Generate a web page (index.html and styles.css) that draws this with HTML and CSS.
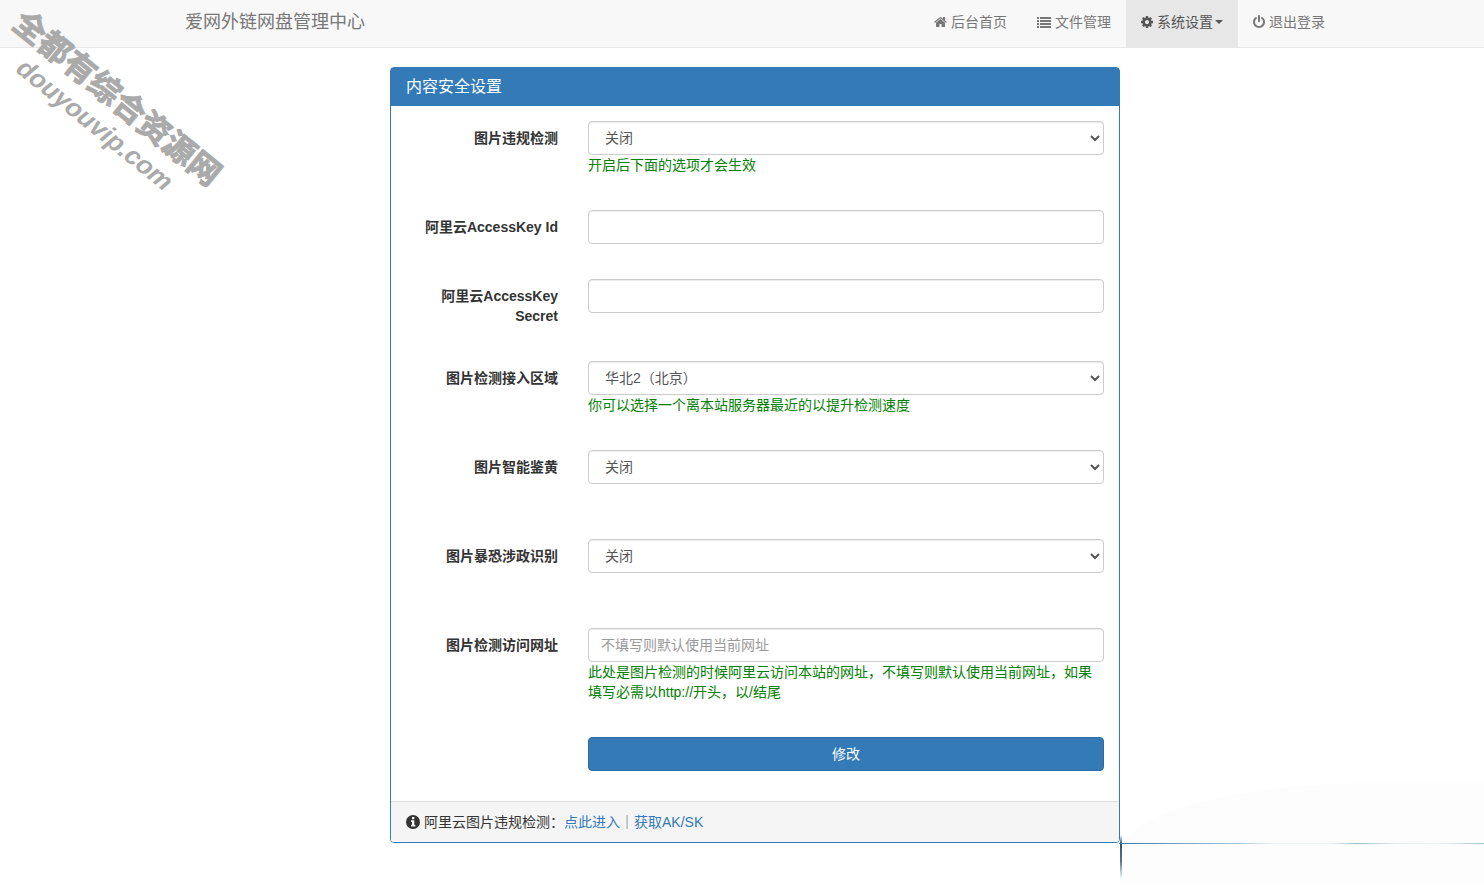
FILE: index.html
```html
<!DOCTYPE html>
<html lang="zh-CN">
<head>
<meta charset="utf-8">
<title>内容安全设置</title>
<link rel="stylesheet" href="styles.css">
</head>
<body>
<header class="navbar">
  <div class="navbar-inner">
    <a class="brand" href="#">爱网外链网盘管理中心</a>
    <nav class="nav">
      <a class="nav-link" href="#"><svg class="icon icon-home" viewBox="64 0 1664 1792" aria-hidden="true"><path d="M1472 992v480q0 26-19 45t-45 19h-384v-384h-256v384h-384q-26 0-45-19t-19-45v-480q0-1 .5-3t.5-3l575-474 575 474q1 2 1 6zm223-69l-62 74q-8 9-21 11h-3q-13 0-21-7l-692-577-692 577q-12 8-24 7-13-2-21-11l-62-74q-8-10-7-23.5t11-21.5l719-599q32-26 76-26t76 26l244 204v-195q0-14 9-23t23-9h192q14 0 23 9t9 23v408l219 182q10 8 11 21.5t-7 23.5z"/></svg>后台首页</a>
      <a class="nav-link" href="#"><svg class="icon" viewBox="0 0 14 14" aria-hidden="true"><path d="M0 2h2v2H0zM3 2h11v2H3zM0 5h2v2H0zM3 5h11v2H3zM0 8h2v2H0zM3 8h11v2H3zM0 11h2v2H0zM3 11h11v2H3z"/></svg>文件管理</a>
      <a class="nav-link active" href="#"><svg class="icon icon-narrow" viewBox="128 0 1536 1792" aria-hidden="true"><path d="M1152 896q0-106-75-181t-181-75-181 75-75 181 75 181 181 75 181-75 75-181zm512-109v222q0 12-8 23t-20 13l-185 28q-19 54-39 91 35 50 107 138 10 12 10 25t-9 23q-27 37-99 108t-94 71q-12 0-26-9l-138-108q-44 23-91 38-16 136-29 186-7 28-36 28h-222q-14 0-24.5-8.5t-11.5-21.5l-28-184q-49-16-90-37l-141 107q-10 9-25 9-14 0-25-11-126-114-165-168-7-10-7-23 0-12 8-23 15-21 51-66.5t54-70.5q-27-50-41-99l-183-27q-13-2-21-12.5t-8-23.5v-222q0-12 8-23t19-13l186-28q14-46 39-92-40-57-107-138-10-12-10-24 0-10 9-23 26-36 98.5-107.5t94.5-71.5q13 0 26 10l138 107q44-23 91-38 16-136 29-186 7-28 36-28h222q14 0 24.5 8.5t11.5 21.5l28 184q49 16 90 37l142-107q9-9 24-9 13 0 25 10 129 119 165 170 7 8 7 22 0 12-8 23-15 21-51 66.5t-54 70.5q26 50 41 98l183 28q13 2 21 12.5t8 23.5z"/></svg>系统设置<span class="caret"></span></a>
      <a class="nav-link" href="#"><svg class="icon icon-narrow" viewBox="128 0 1536 1792" aria-hidden="true"><path d="M1664 896q0 156-61 298t-164 245-245 164-298 61-298-61-245-164-164-245-61-298q0-182 80.5-343t226.5-270q43-32 95.5-25t83.5 50q32 42 24.5 94.5t-49.5 84.5q-98 74-151.5 181t-53.5 228q0 104 40.5 198.5t109.5 163.5 163.5 109.5 198.5 40.5 198.5-40.5 163.5-109.5 109.5-163.5 40.5-198.5q0-121-53.5-228t-151.5-181q-42-32-49.5-84.5t24.5-94.5q31-43 84-50t95 25q146 109 226.5 270t80.5 343zm-640-768v640q0 52-38 90t-90 38-90-38-38-90v-640q0-52 38-90t90-38 90 38 38 90z"/></svg>退出登录</a>
    </nav>
  </div>
</header>

<main>
  <section class="panel">
    <h1 class="panel-heading">内容安全设置</h1>
    <form class="panel-body">
      <div class="form-group">
        <label for="check">图片违规检测</label>
        <div class="field">
          <select id="check" class="control"><option>关闭</option><option>开启</option></select>
          <p class="help">开启后下面的选项才会生效</p>
        </div>
      </div>
      <div class="form-group">
        <label for="key-id">阿里云AccessKey Id</label>
        <div class="field"><input id="key-id" class="control" type="text"></div>
      </div>
      <div class="form-group">
        <label for="key-secret">阿里云AccessKey Secret</label>
        <div class="field"><input id="key-secret" class="control" type="text"></div>
      </div>
      <div class="form-group">
        <label for="region">图片检测接入区域</label>
        <div class="field">
          <select id="region" class="control"><option>华北2（北京）</option></select>
          <p class="help">你可以选择一个离本站服务器最近的以提升检测速度</p>
        </div>
      </div>
      <div class="form-group">
        <label for="porn">图片智能鉴黄</label>
        <div class="field">
          <select id="porn" class="control"><option>关闭</option><option>开启</option></select>
          <p class="help"></p>
        </div>
      </div>
      <div class="form-group">
        <label for="terror">图片暴恐涉政识别</label>
        <div class="field">
          <select id="terror" class="control"><option>关闭</option><option>开启</option></select>
          <p class="help"></p>
        </div>
      </div>
      <div class="form-group">
        <label for="url">图片检测访问网址</label>
        <div class="field">
          <input id="url" class="control" type="text" placeholder="不填写则默认使用当前网址">
          <p class="help">此处是图片检测的时候阿里云访问本站的网址，不填写则默认使用当前网址，如果填写必需以http://开头，以/结尾</p>
        </div>
      </div>
      <div class="form-group">
        <div class="field field-action"><button class="submit" type="submit">修改</button></div>
      </div>
    </form>
    <footer class="panel-footer"><svg class="icon" viewBox="0 0 14 14" aria-hidden="true"><path fill-rule="evenodd" d="M7 0a7 7 0 1 0 0 14A7 7 0 0 0 7 0zM6 2h2.300v2.200H6zM5 5.300h3.300v4.500h1V11.500H5V9.800h1V7H5z"/></svg>阿里云图片违规检测：<a href="#">点此进入</a><span class="divider">｜</span><a href="#">获取AK/SK</a></footer>
    <div class="smudge-down" aria-hidden="true"></div>
    <div class="smudge-across" aria-hidden="true"></div>
  </section>
</main>
<div class="haze" aria-hidden="true"></div>
<div class="watermark" aria-hidden="true">
  <div class="watermark-name">全都有综合资源网</div>
  <div class="watermark-site">douyouvip.com</div>
</div>
</body>
</html>
```

FILE: styles.css
```css
* { box-sizing: border-box; }

body {
  position: relative;
  min-height: 100vh;
  margin: 0;
  background: #fff;
  color: #333;
  font: 14px/20px "Liberation Sans", "Noto Sans CJK SC", sans-serif;
}

a { color: #337ab7; text-decoration: none; }

.navbar,
main { padding-left: 26px; }

.navbar {
  background: #f8f8f8;
  border-bottom: 1px solid #e7e7e7;
}

.navbar-inner {
  display: flex;
  justify-content: space-between;
  max-width: 1170px;
  margin: 0 auto;
  padding-left: 15px;
}

.brand {
  padding: 12px 0 15px;
  font-size: 18px;
  color: #777;
}

.nav { display: flex; }

.nav-link {
  display: flex;
  align-items: center;
  padding: 12px 15px 15px;
  color: #777;
}

.nav-link.active { background: #e7e7e7; color: #555; }

.icon {
  flex: none;
  width: 14px;
  height: 14px;
  margin-right: 4px;
  fill: currentColor;
}

.icon-home { width: 13px; }
.icon-narrow { width: 12px; }

.caret {
  margin-left: 2px;
  border: 4px solid transparent;
  border-top-color: currentColor;
  border-bottom: 0;
}

.panel {
  position: relative;
  max-width: 730px;
  margin: 19px auto 0;
  border: 1px solid #337ab7;
  border-radius: 4px;
}

.panel-heading {
  margin: 0;
  padding: 9px 15px;
  background: #337ab7;
  color: #fff;
  font-size: 16px;
  font-weight: 400;
  line-height: 20px;
}

.panel-body {
  display: grid;
  gap: 35px;
  padding: 15px 15px 30px;
}

.form-group {
  display: grid;
  grid-template-columns: 1fr 3fr;
  margin: 0 -15px;
}

label {
  padding: 7px 15px 0;
  text-align: right;
  font-weight: 700;
}

.field { padding: 0 15px; }
.field-action { grid-column: 2; }

.control {
  display: block;
  width: 100%;
  height: 34px;
  padding: 6px 12px;
  border: 1px solid #ccc;
  border-radius: 4px;
  background: #fff;
  color: #555;
  font: inherit;
  box-shadow: inset 0 1px 1px rgba(0, 0, 0, 0.075);
}

.control::placeholder { color: #999; }

.help {
  min-height: 20px;
  margin: 0;
  color: #008000;
}

.submit {
  display: block;
  width: 100%;
  height: 34px;
  border: 1px solid #2e6da4;
  border-radius: 4px;
  background: #337ab7;
  color: #fff;
  font: inherit;
}

.panel-footer {
  display: flex;
  align-items: center;
  padding: 10px 15px;
  border-top: 1px solid #ddd;
  border-radius: 0 0 3px 3px;
  background: #f5f5f5;
}

/* Faded strokes at the lower right corner of the panel */
.smudge-down,
.smudge-across {
  position: absolute;
  left: 100%;
  top: 100%;
}

.smudge-down {
  width: 2px;
  height: 44px;
  margin-top: -7px;
  margin-left: 1px;
  background: linear-gradient(#337ab700, #2b5572 20%, #5b7688 60%, #c8d0d600);
}

.smudge-across {
  width: 365px;
  height: 1px;
  margin-top: 1px;
  background: linear-gradient(90deg, #337ab7, #6d9fc2 15%, #a9c6d8 33%, #edf2f4 42%, #edf2f4 58%, #9dbccc 65%, #e9eff2 76%, #edf2f4 88%, #a9c4d2);
}

.divider { color: #666; }

.haze {
  position: absolute;
  right: 0;
  bottom: 0;
  z-index: -1;
  width: 363px;
  height: 100px;
  border-radius: 70% 0 0 0;
  background: #fdfdfd;
}

.watermark {
  position: absolute;
  left: 29px;
  top: 4px;
  color: #aaa;
  font-weight: 700;
  white-space: nowrap;
  transform: rotate(39deg);
  transform-origin: 0 0;
}

.watermark-name {
  font-size: 32px;
  line-height: 36px;
  -webkit-text-stroke: 1px #aaa;
}

.watermark-site {
  padding-left: 31px;
  font-size: 26px;
  font-style: italic;
  line-height: 32px;
}
```
